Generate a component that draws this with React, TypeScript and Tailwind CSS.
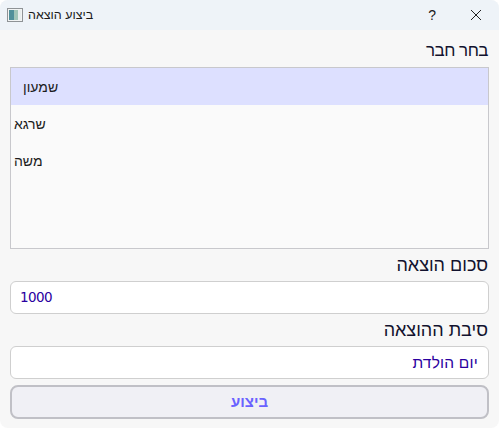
export default function App() {
  return (
    <div className="w-[499px] h-[428px] bg-white">
      <div className="w-full h-full rounded-[8px] overflow-hidden bg-[#f7f7f7] flex flex-col font-['Liberation_Sans',sans-serif]">
        <div className="h-[30px] shrink-0 bg-[#eef3f8] flex items-center">
          <svg width="16" height="14" viewBox="0 0 16 14" className="ml-[7px] mr-[5px]">
            <rect x="0.5" y="0.5" width="15" height="13" fill="#f2f4f4" stroke="#8f9396" />
            <rect x="2" y="2" width="5" height="10" fill="#4f8f9a" />
            <rect x="7" y="2" width="4" height="10" fill="#9fc4b8" />
            <rect x="11" y="2" width="3" height="10" fill="#e8eeee" />
          </svg>
          <span dir="rtl" className="text-[12.5px] text-[#1a1a1a]">ביצוע הוצאה</span>
          <span className="ml-auto mr-[34px] text-[14px] leading-none text-[#1a1a1a]">?</span>
          <svg width="12" height="12" viewBox="0 0 12 12" className="mr-[17px]" fill="none" stroke="#222" strokeWidth="1">
            <path d="M1 1 L11 11 M11 1 L1 11" />
          </svg>
        </div>
        <div className="flex-1 flex flex-col px-[10px]">
          <div dir="rtl" className="h-[37px] flex items-end pb-[6px] text-[17px] tracking-[-0.5px] leading-[20px] text-[#12122e] pr-[1px]">בחר חבר</div>
          <div className="h-[182px] bg-[#fafafa] border border-[#c8c8cc] flex flex-col text-[14px] text-[#1c1c1c]">
            <div className="h-[37px] bg-[#dde0ff] flex items-center pl-[12px] pt-[2px]"><span dir="rtl">שמעון</span></div>
            <div className="h-[37px] flex items-center pl-[3px] pt-[2px]"><span dir="rtl">שרגא</span></div>
            <div className="h-[37px] flex items-center pl-[3px] pt-[2px]"><span dir="rtl">משה</span></div>
          </div>
          <div dir="rtl" className="h-[32px] flex items-center text-[18px] text-[#12122e] pr-[1px]">סכום הוצאה</div>
          <div className="h-[33px] bg-white border border-[#cfcfcf] rounded-[6px] flex items-center pl-[9px] text-[13.5px] tracking-[-0.6px] text-[#2a00a0] font-['DejaVu_Sans',sans-serif]">1000</div>
          <div dir="rtl" className="h-[32px] flex items-center text-[18px] text-[#12122e] pr-[1px]">סיבת ההוצאה</div>
          <div dir="rtl" className="h-[33px] bg-white border border-[#cfcfcf] rounded-[6px] flex items-center pr-[10px] text-[15.5px] tracking-[0.2px] text-[#2a00a0]">יום הולדת</div>
          <div dir="rtl" className="mt-[6px] h-[34px] bg-[#f0f0f5] border-2 border-[#c0c0c6] rounded-[8px] flex items-center justify-center pt-[1px] text-[15px] font-bold text-[#6a62ff]">ביצוע</div>
        </div>
      </div>
    </div>
  );
}
